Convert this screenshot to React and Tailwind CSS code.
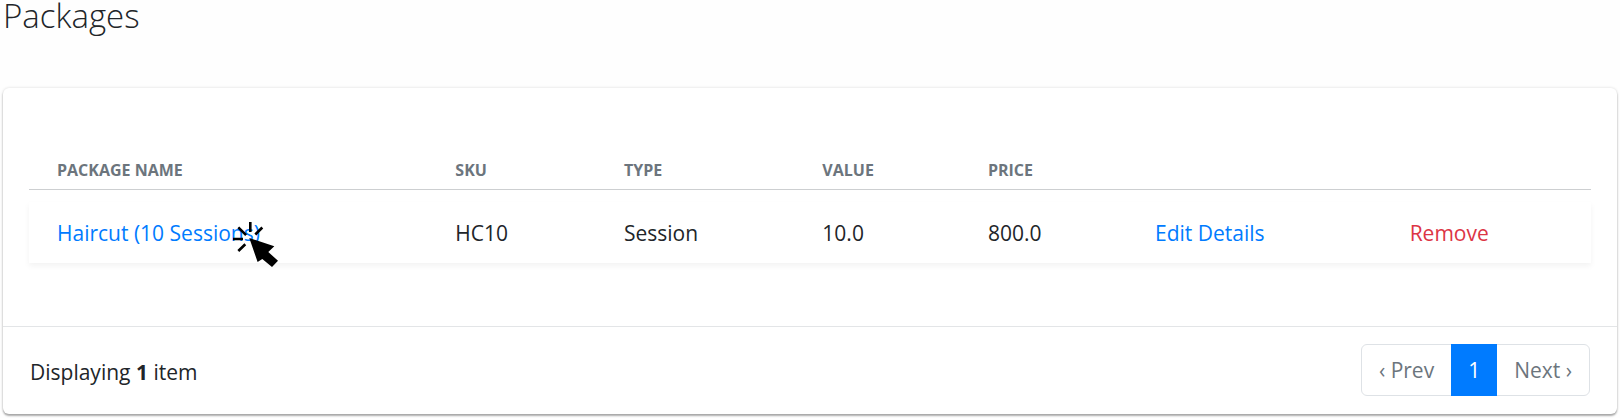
const columns = [
  { label: "Package Name", width: "w-[25.5%]" },
  { label: "SKU", width: "w-[10.8%]" },
  { label: "Type", width: "w-[12.7%]" },
  { label: "Value", width: "w-[10.6%]" },
  { label: "Price", width: "w-[10.7%]" },
  { label: "", width: "w-[16.3%]" },
  { label: "", width: "w-[13.4%]" },
];

const packages = [
  { name: "Haircut (10 Sessions)", sku: "HC10", type: "Session", value: "10.0", price: "800.0" },
];

function ClickPointer() {
  return (
    <svg
      className="pointer-events-none absolute top-[3px] left-[175px] size-12"
      viewBox="0 0 48 48"
      aria-hidden="true"
    >
      <path
        d="M18.3 2v10M30.3 7.5l-7 7M6.3 7.3l7.8 7.8M1 19h10M13.3 24.2l-7 6.8"
        stroke="#000"
        strokeWidth="2.6"
        fill="none"
      />
      <path d="M17.3 18l25 8.3-6 5.7 9.7 8.8-6 6.2-9.7-8-4.7 3z" fill="#000" />
    </svg>
  );
}

function PackagesTable() {
  return (
    <table className="w-full table-fixed border-separate border-spacing-x-0 border-spacing-y-3">
      <thead>
        <tr>
          {columns.map((column, index) => (
            <th
              key={index}
              scope="col"
              className={`${column.width} border-b border-[#cdcfd1] px-7 pb-[5px] text-left text-base leading-7 font-bold whitespace-nowrap text-[#6c757d] uppercase`}
            >
              {column.label}
            </th>
          ))}
        </tr>
      </thead>
      <tbody>
        {packages.map((item) => (
          <tr key={item.sku} className="shadow-[0_3px_6px_rgba(0,0,0,0.05)]">
            <td className="px-7 pt-[15px] pb-3.5">
              <div className="relative">
                <a href="#package" className="whitespace-nowrap text-[#007bff]">{item.name}</a>
                <ClickPointer />
              </div>
            </td>
            <td className="px-7 pt-[15px] pb-3.5">{item.sku}</td>
            <td className="px-7 pt-[15px] pb-3.5">{item.type}</td>
            <td className="px-7 pt-[15px] pb-3.5">{item.value}</td>
            <td className="px-7 pt-[15px] pb-3.5">{item.price}</td>
            <td className="px-7 pt-[15px] pb-3.5 whitespace-nowrap">
              <a href="#edit" className="text-[#007bff]">Edit Details</a>
            </td>
            <td className="px-7 pt-[15px] pb-3.5">
              <a href="#remove" className="text-[#dc3545]">Remove</a>
            </td>
          </tr>
        ))}
      </tbody>
    </table>
  );
}

function Pagination() {
  return (
    <nav
      aria-label="Pagination"
      className="flex h-[52px] items-stretch rounded-md border border-[#dee2e6] text-[#6c757d]"
    >
      <a href="#prev" className="flex items-center px-[17px]">‹ Prev</a>
      <a href="#page-1" aria-current="page" className="-my-px flex items-center bg-[#007bff] px-[17px] text-white">
        1
      </a>
      <a href="#next" className="flex items-center px-[17px]">Next ›</a>
    </nav>
  );
}

export default function App() {
  return (
    <div className="bg-[#fefefe] px-[3px] pb-1 font-['Open_Sans','Noto_Sans',sans-serif] text-[21px] leading-8 text-[#212529]">
      <h1 className="text-[33px] leading-8 font-light">Packages</h1>
      <main className="mt-14 rounded-md bg-white shadow-[0_0_3px_rgba(0,0,0,0.15),0_2px_2px_rgba(0,0,0,0.3)]">
        <div className="px-[26px] pt-14 pb-[51px]">
          <PackagesTable />
        </div>
        <footer className="flex items-center justify-between border-t border-[#e3e5e7] px-[27px] pt-[17px] pb-[18px]">
          <p className="pt-1">
            Displaying <b>1</b> item
          </p>
          <Pagination />
        </footer>
      </main>
    </div>
  );
}
